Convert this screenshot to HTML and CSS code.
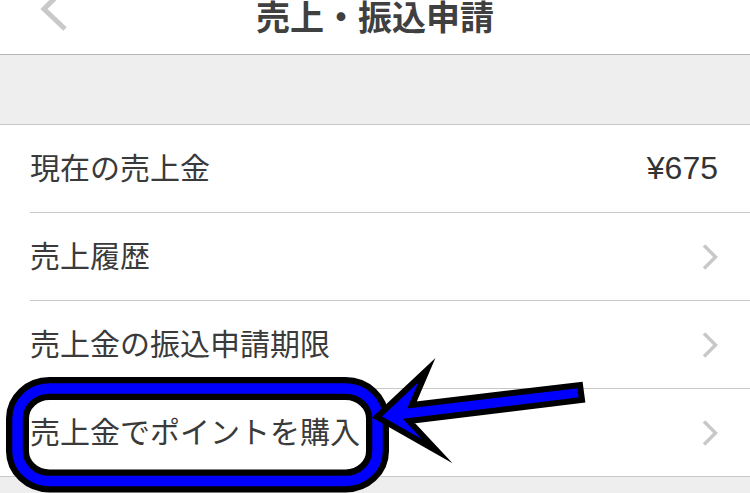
FILE: index.html
```html
<!DOCTYPE html>
<html lang="ja">
<head>
<meta charset="utf-8">
<title>売上・振込申請</title>
<link rel="stylesheet" href="styles.css">
</head>
<body>
<div class="page">
  <header class="nav">
    <div class="nav-left">
      <svg class="back" width="30" height="32" viewBox="0 0 30 32"><polyline points="26,-11 6,9 27,29" fill="none" stroke="#c9c9c9" stroke-width="5"/></svg>
    </div>
    <h1 class="nav-title">売上・振込申請</h1>
    <div class="nav-right"></div>
  </header>
  <div class="spacer"></div>
  <ul class="list">
    <li class="row"><div class="row-inner"><span class="label">現在の売上金</span><span class="value">¥675</span></div></li>
    <li class="row"><div class="row-inner"><span class="label">売上履歴</span><svg class="chev" width="16" height="26" viewBox="0 0 16 26"><polyline points="2,1.5 13.5,13 2,24.5" fill="none" stroke="#c8c8c8" stroke-width="3.5"/></svg></div></li>
    <li class="row"><div class="row-inner"><span class="label">売上金の振込申請期限</span><svg class="chev" width="16" height="26" viewBox="0 0 16 26"><polyline points="2,1.5 13.5,13 2,24.5" fill="none" stroke="#c8c8c8" stroke-width="3.5"/></svg></div></li>
    <li class="row last"><div class="row-inner"><span class="label">売上金でポイントを購入</span><svg class="chev" width="16" height="26" viewBox="0 0 16 26"><polyline points="2,1.5 13.5,13 2,24.5" fill="none" stroke="#c8c8c8" stroke-width="3.5"/></svg></div></li>
  </ul>
  <div class="footer-gap"></div>
  <svg class="annotation" width="750" height="493" viewBox="0 0 750 493">
    <rect x="17.5" y="388.5" width="360" height="92.5" rx="32" ry="30" fill="none" stroke="#000" stroke-width="23"/>
    <rect x="17.5" y="388.5" width="360" height="92.5" rx="32" ry="30" fill="none" stroke="#0000ff" stroke-width="10.5"/>
    <polygon points="377,417 427,370 412,405 580,385 582,400 409,421 437,451" fill="#0000ff" stroke="#000" stroke-width="6" stroke-linejoin="miter" stroke-miterlimit="10"/>
  </svg>
</div>
</body>
</html>
```

FILE: styles.css
```css
html, body {
  margin: 0;
  padding: 0;
  background: #eeeeee;
  overflow: hidden;
}

.page {
  position: relative;
  width: 750px;
  height: 493px;
  overflow: hidden;
  background: #eeeeee;
  font-family: "Liberation Sans", "Noto Sans CJK JP", sans-serif;
}

.nav {
  display: grid;
  grid-template-columns: 1fr auto 1fr;
  align-items: start;
  height: 54px;
  background: #ffffff;
  border-bottom: 1px solid #b4b4b4;
}

.nav-left {
  display: flex;
  padding-left: 38px;
}

.back {
  display: block;
}

.nav-title {
  margin: 0;
  font-family: "Noto Sans CJK JP", sans-serif;
  font-size: 34px;
  font-weight: 700;
  line-height: 32px;
  color: #404040;
  white-space: nowrap;
}

.spacer {
  height: 69px;
  background: #eeeeee;
}

.list {
  list-style: none;
  margin: 0;
  padding: 0;
  background: #ffffff;
  border-top: 1px solid #c8c8c8;
  border-bottom: 1px solid #c8c8c8;
}

.row {
  padding-left: 30px;
}

.row-inner {
  display: flex;
  align-items: center;
  justify-content: space-between;
  height: 87px;
  padding-right: 32px;
  border-bottom: 1px solid #c8c8c8;
}

.row.last .row-inner {
  border-bottom: none;
}

.label {
  font-size: 30px;
  line-height: 1.2;
  color: #3a3a3a;
  white-space: nowrap;
}

.value {
  font-size: 32px;
  line-height: 1.2;
  color: #333333;
}

.chev {
  display: block;
}

.footer-gap {
  height: 20px;
  background: #eeeeee;
}

.annotation {
  position: absolute;
  top: 0;
  left: 0;
  pointer-events: none;
}
```
